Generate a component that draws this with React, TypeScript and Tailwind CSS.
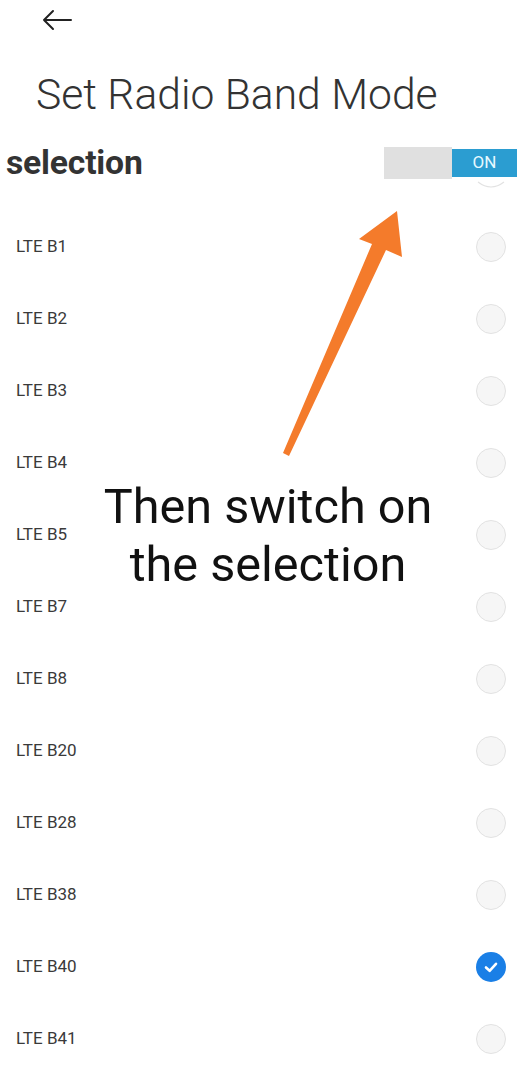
import React from "react";

const bands = ["B1", "B2", "B3", "B4", "B5", "B7", "B8", "B20", "B28", "B38", "B40", "B41"];

function Radio({ checked }: { checked: boolean }) {
  if (checked) {
    return (
      <div className="w-[30px] h-[30px] rounded-full bg-[#1a7fe6] flex items-center justify-center">
        <svg width="18" height="18" viewBox="0 0 18 18" fill="none">
          <path d="M4 9.5 L7.6 12.8 L14 5.8" stroke="white" strokeWidth="2.6" strokeLinecap="round" strokeLinejoin="round" />
        </svg>
      </div>
    );
  }
  return <div className="w-[30px] h-[30px] rounded-full border border-[#e2e2e2] bg-[#f6f6f6]" />;
}

export default function App() {
  return (
    <div className="relative w-[525px] h-[1080px] bg-white overflow-hidden" style={{ fontFamily: "Roboto, 'Liberation Sans', sans-serif" }}>
      <div className="h-10 flex items-center pl-[42px]">
        <svg width="30" height="22" viewBox="0 0 30 22" fill="none">
          <path d="M2 11 H29 M11 2 L2 11 L11 20" stroke="#222" strokeWidth="2" strokeLinecap="round" strokeLinejoin="round" />
        </svg>
      </div>
      <div className="mt-[28px] pl-[36px] text-[42.6px] leading-[52px] font-light text-[#333]">Set Radio Band Mode</div>
      <div className="mt-[20px] h-[46px] flex items-center justify-between pl-[6px] pr-[8px]">
        <div className="text-[33.7px] font-bold text-[#333] tracking-[-0.2px]">selection</div>
        <div className="flex items-center">
          <div className="w-[68px] h-[32px] bg-[#e0e0e0]" />
          <div className="w-[65px] h-[28px] bg-[#2b9dd1] flex items-center justify-center text-[17px] text-[#e6f9ff]">ON</div>
        </div>
      </div>
      <div className="mt-[25px] flex flex-col">
        {bands.map((b) => (
          <div key={b} className="h-[72px] flex items-center justify-between pl-[16px] pr-[19px]">
            <span className="text-[17px] text-[#3a3a3a]">LTE {b}</span>
            <Radio checked={b === "B40"} />
          </div>
        ))}
      </div>

      {/* partial circle under switch */}
      <svg className="absolute left-[474px] top-[179px]" width="34" height="12" viewBox="0 0 34 12" fill="none">
        <path d="M4 3 Q17 13 30 3" stroke="#e2e2e2" strokeWidth="1.2" fill="none" />
      </svg>

      {/* annotation arrow */}
      <svg className="absolute left-0 top-0 pointer-events-none" width="525" height="1080" viewBox="0 0 525 1080">
        <polygon points="397,211 402,257 386,250 289,456 283,453 372,244 359,239" fill="#f47b2b" />
      </svg>

      {/* annotation text */}
      <div className="absolute left-0 w-[536px] top-[478px] text-center text-[48.6px] leading-[58px] text-[#111] pointer-events-none">
        Then switch on
        <br />
        the selection
      </div>
    </div>
  );
}
